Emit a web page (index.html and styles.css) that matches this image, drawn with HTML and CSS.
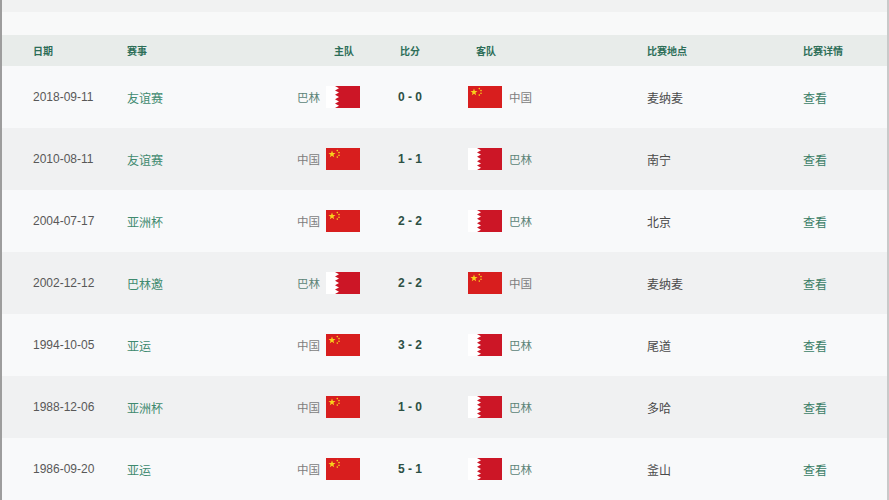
FILE: index.html
```html
<!DOCTYPE html>
<html lang="zh">
<head>
<meta charset="utf-8">
<title>中国 vs 巴林 历史交锋</title>
<link rel="stylesheet" href="styles.css">
</head>
<body>
<svg width="0" height="0" class="defs">
  <defs>
    <symbol id="cn" viewBox="0 0 34 22">
      <rect width="34" height="22" fill="#d81e1e"/>
      <polygon points="6,2.6 6.9,5.1 9.5,5.1 7.4,6.7 8.2,9.2 6,7.7 3.8,9.2 4.6,6.7 2.5,5.1 5.1,5.1" fill="#f7d21c"/>
      <circle cx="11.3" cy="2.6" r="0.8" fill="#f7d21c"/>
      <circle cx="13" cy="4.6" r="0.8" fill="#f7d21c"/>
      <circle cx="13" cy="7.2" r="0.8" fill="#f7d21c"/>
      <circle cx="11.3" cy="9.1" r="0.8" fill="#f7d21c"/>
    </symbol>
    <symbol id="bh" viewBox="0 0 34 22">
      <rect width="34" height="22" fill="#ffffff"/>
      <polygon points="34,0 9,0 13,2.2 9,4.4 13,6.6 9,8.8 13,11 9,13.2 13,15.4 9,17.6 13,19.8 9,22 34,22" fill="#cc1626"/>
    </symbol>
  </defs>
</svg>
<div class="page">
  <div class="topband"></div>
  <div class="gap"></div>
  <div class="grid head">
    <div class="c-date">日期</div>
    <div class="c-comp">赛事</div>
    <div class="c-home h-home">主队</div>
    <div class="c-score">比分</div>
    <div class="c-away h-away">客队</div>
    <div class="c-venue">比赛地点</div>
    <div class="c-detail">比赛详情</div>
  </div>

  <div class="grid row">
    <div class="c-date">2018-09-11</div>
    <div class="c-comp">友谊赛</div>
    <div class="c-home"><span class="team bh-t">巴林</span><svg class="flag"><use href="#bh"/></svg></div>
    <div class="c-score score">0 - 0</div>
    <div class="c-away"><svg class="flag"><use href="#cn"/></svg><span class="team cn-t">中国</span></div>
    <div class="c-venue">麦纳麦</div>
    <div class="c-detail link">查看</div>
  </div>

  <div class="grid row alt">
    <div class="c-date">2010-08-11</div>
    <div class="c-comp">友谊赛</div>
    <div class="c-home"><span class="team cn-t">中国</span><svg class="flag"><use href="#cn"/></svg></div>
    <div class="c-score score">1 - 1</div>
    <div class="c-away"><svg class="flag"><use href="#bh"/></svg><span class="team bh-t">巴林</span></div>
    <div class="c-venue">南宁</div>
    <div class="c-detail link">查看</div>
  </div>

  <div class="grid row">
    <div class="c-date">2004-07-17</div>
    <div class="c-comp">亚洲杯</div>
    <div class="c-home"><span class="team cn-t">中国</span><svg class="flag"><use href="#cn"/></svg></div>
    <div class="c-score score">2 - 2</div>
    <div class="c-away"><svg class="flag"><use href="#bh"/></svg><span class="team bh-t">巴林</span></div>
    <div class="c-venue">北京</div>
    <div class="c-detail link">查看</div>
  </div>

  <div class="grid row alt">
    <div class="c-date">2002-12-12</div>
    <div class="c-comp">巴林邀</div>
    <div class="c-home"><span class="team bh-t">巴林</span><svg class="flag"><use href="#bh"/></svg></div>
    <div class="c-score score">2 - 2</div>
    <div class="c-away"><svg class="flag"><use href="#cn"/></svg><span class="team cn-t">中国</span></div>
    <div class="c-venue">麦纳麦</div>
    <div class="c-detail link">查看</div>
  </div>

  <div class="grid row">
    <div class="c-date">1994-10-05</div>
    <div class="c-comp">亚运</div>
    <div class="c-home"><span class="team cn-t">中国</span><svg class="flag"><use href="#cn"/></svg></div>
    <div class="c-score score">3 - 2</div>
    <div class="c-away"><svg class="flag"><use href="#bh"/></svg><span class="team bh-t">巴林</span></div>
    <div class="c-venue">尾道</div>
    <div class="c-detail link">查看</div>
  </div>

  <div class="grid row alt">
    <div class="c-date">1988-12-06</div>
    <div class="c-comp">亚洲杯</div>
    <div class="c-home"><span class="team cn-t">中国</span><svg class="flag"><use href="#cn"/></svg></div>
    <div class="c-score score">1 - 0</div>
    <div class="c-away"><svg class="flag"><use href="#bh"/></svg><span class="team bh-t">巴林</span></div>
    <div class="c-venue">多哈</div>
    <div class="c-detail link">查看</div>
  </div>

  <div class="grid row">
    <div class="c-date">1986-09-20</div>
    <div class="c-comp">亚运</div>
    <div class="c-home"><span class="team cn-t">中国</span><svg class="flag"><use href="#cn"/></svg></div>
    <div class="c-score score">5 - 1</div>
    <div class="c-away"><svg class="flag"><use href="#bh"/></svg><span class="team bh-t">巴林</span></div>
    <div class="c-venue">釜山</div>
    <div class="c-detail link">查看</div>
  </div>
</div>
</body>
</html>
```

FILE: styles.css
```css
html, body {
  margin: 0;
  padding: 0;
  background: #f7f8f9;
}
body {
  font-family: "Liberation Sans", "Noto Sans CJK SC", sans-serif;
  font-size: 12px;
  color: #555;
  overflow: hidden;
}
.defs {
  position: absolute;
  width: 0;
  height: 0;
}
.page {
  width: 885px;
  height: 500px;
  border-left: 2px solid #9d9d9d;
  border-right: 2px solid #c9c9c9;
  background: #f8f9fa;
}
.topband {
  height: 12px;
  background: #f1f2f2;
}
.gap {
  height: 23px;
  background: #f8f9f9;
}
.grid {
  display: grid;
  grid-template-columns: 94px 113px 120px 100px 187px 156px 1fr;
  padding-left: 31px;
  align-items: center;
}
.head {
  height: 31px;
  background: #e8ecea;
  font-size: 10px;
  font-weight: bold;
  color: #2d6e58;
}
.row {
  height: 62px;
  background: #f8f9fa;
}
.row.alt {
  background: #f0f1f2;
}
.c-home {
  display: flex;
  justify-content: flex-end;
  align-items: center;
}
.h-home {
  padding-right: 6px;
}
.c-score {
  text-align: center;
}
.c-away {
  display: flex;
  align-items: center;
  padding-left: 8px;
}
.h-away {
  padding-left: 16px;
}
.flag {
  width: 34px;
  height: 22px;
  display: block;
}
.team {
  font-size: 11.5px;
}
.c-home .team {
  margin-right: 6px;
}
.c-away .team {
  margin-left: 7px;
}
.cn-t {
  color: #7d7d7d;
}
.bh-t {
  color: #5c8478;
}
.row .c-date {
  color: #585858;
}
.row .c-comp {
  color: #3f8a6f;
}
.score {
  font-weight: bold;
  color: #2c5044;
}
.row .c-venue {
  color: #4a4a4a;
}
.link {
  color: #3a7d66;
}
```
